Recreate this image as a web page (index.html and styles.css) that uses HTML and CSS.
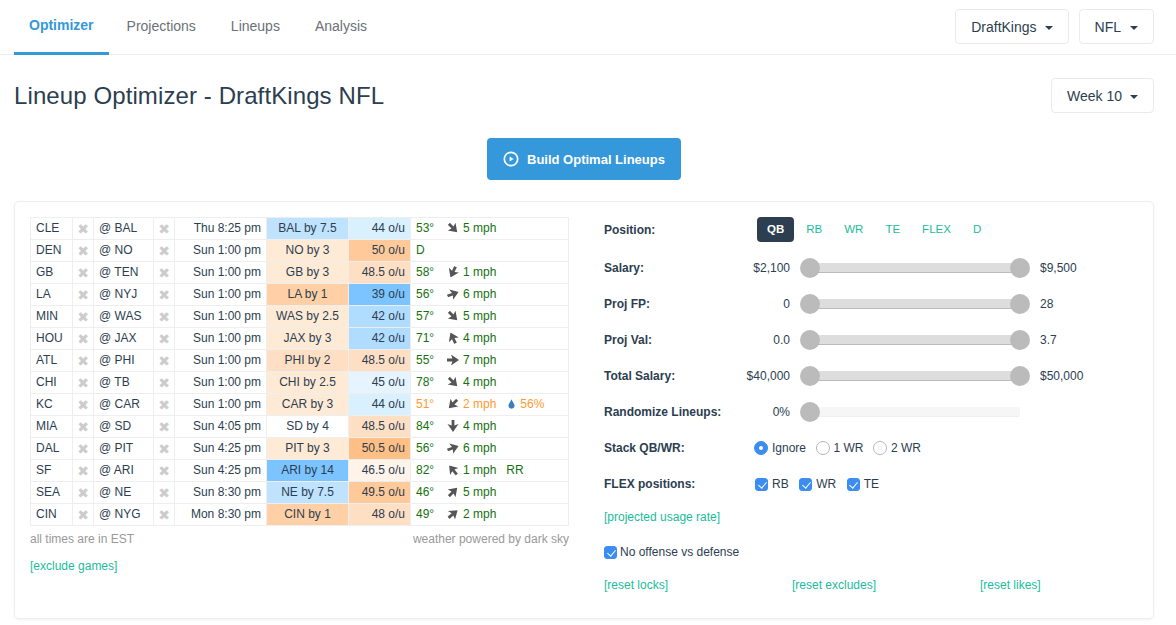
FILE: index.html
```html
<!DOCTYPE html>
<html lang="en">
<head>
    <meta charset="UTF-8">
    <title>Lineup Optimizer</title>
    <link rel="stylesheet" href="styles.css">
</head>
<body>

<svg class="defs" width="0" height="0">
    <symbol id="wind" viewBox="0 0 12 12">
        <path d="M6 0L11.5 8L7.4 6.6V12H4.6V6.6L.5 8Z"/>
    </symbol>
</svg>

<nav class="topbar">
    <div class="tabs">
        <a class="tab active">Optimizer</a>
        <a class="tab">Projections</a>
        <a class="tab">Lineups</a>
        <a class="tab">Analysis</a>
    </div>
    <div class="top-actions">
        <button class="dropdown">DraftKings<span class="caret"></span></button>
        <button class="dropdown">NFL<span class="caret"></span></button>
    </div>
</nav>

<main class="page">
    <div class="title-row">
        <h1>Lineup Optimizer - DraftKings NFL</h1>
        <button class="dropdown">Week 10<span class="caret"></span></button>
    </div>

    <div class="build-row">
        <button class="build">
            <svg class="play" viewBox="0 0 16 16" width="16" height="16">
                <circle cx="8" cy="8" r="6.7" fill="none" stroke="#fff" stroke-width="1.7"/>
                <path d="M6.6 5.4L10.6 8L6.6 10.6Z" fill="#fff"/>
            </svg>
            Build Optimal Lineups
        </button>
    </div>

    <section class="card">
        <div class="games">
            <table class="games-table">
                <colgroup>
                    <col class="c-team"><col class="c-x"><col class="c-opp"><col class="c-x">
                    <col class="c-time"><col class="c-spread"><col class="c-ou"><col class="c-weather">
                </colgroup>
                <tr>
                    <td>CLE</td><td class="x">✖</td><td>@ BAL</td><td class="x">✖</td><td class="time">Thu 8:25 pm</td>
                    <td class="spread cool-2">BAL by 7.5</td><td class="ou cool-1">44 o/u</td>
                    <td><div class="wx"><span class="temp">53°</span><span class="arrow"><svg style="transform: rotate(135deg)"><use href="#wind"/></svg></span><span>5 mph</span></div></td>
                </tr>
                <tr>
                    <td>DEN</td><td class="x">✖</td><td>@ NO</td><td class="x">✖</td><td class="time">Sun 1:00 pm</td>
                    <td class="spread warm-1">NO by 3</td><td class="ou warm-4">50 o/u</td>
                    <td><div class="wx"><span>D</span></div></td>
                </tr>
                <tr>
                    <td>GB</td><td class="x">✖</td><td>@ TEN</td><td class="x">✖</td><td class="time">Sun 1:00 pm</td>
                    <td class="spread warm-1">GB by 3</td><td class="ou warm-2">48.5 o/u</td>
                    <td><div class="wx"><span class="temp">58°</span><span class="arrow"><svg style="transform: rotate(205deg)"><use href="#wind"/></svg></span><span>1 mph</span></div></td>
                </tr>
                <tr>
                    <td>LA</td><td class="x">✖</td><td>@ NYJ</td><td class="x">✖</td><td class="time">Sun 1:00 pm</td>
                    <td class="spread warm-3">LA by 1</td><td class="ou cool-4">39 o/u</td>
                    <td><div class="wx"><span class="temp">56°</span><span class="arrow"><svg style="transform: rotate(70deg)"><use href="#wind"/></svg></span><span>6 mph</span></div></td>
                </tr>
                <tr>
                    <td>MIN</td><td class="x">✖</td><td>@ WAS</td><td class="x">✖</td><td class="time">Sun 1:00 pm</td>
                    <td class="spread warm-1">WAS by 2.5</td><td class="ou cool-3">42 o/u</td>
                    <td><div class="wx"><span class="temp">57°</span><span class="arrow"><svg style="transform: rotate(135deg)"><use href="#wind"/></svg></span><span>5 mph</span></div></td>
                </tr>
                <tr>
                    <td>HOU</td><td class="x">✖</td><td>@ JAX</td><td class="x">✖</td><td class="time">Sun 1:00 pm</td>
                    <td class="spread warm-1">JAX by 3</td><td class="ou cool-3">42 o/u</td>
                    <td><div class="wx"><span class="temp">71°</span><span class="arrow"><svg style="transform: rotate(-25deg)"><use href="#wind"/></svg></span><span>4 mph</span></div></td>
                </tr>
                <tr>
                    <td>ATL</td><td class="x">✖</td><td>@ PHI</td><td class="x">✖</td><td class="time">Sun 1:00 pm</td>
                    <td class="spread warm-2">PHI by 2</td><td class="ou warm-2">48.5 o/u</td>
                    <td><div class="wx"><span class="temp">55°</span><span class="arrow"><svg style="transform: rotate(90deg)"><use href="#wind"/></svg></span><span>7 mph</span></div></td>
                </tr>
                <tr>
                    <td>CHI</td><td class="x">✖</td><td>@ TB</td><td class="x">✖</td><td class="time">Sun 1:00 pm</td>
                    <td class="spread warm-1">CHI by 2.5</td><td class="ou cool-0">45 o/u</td>
                    <td><div class="wx"><span class="temp">78°</span><span class="arrow"><svg style="transform: rotate(135deg)"><use href="#wind"/></svg></span><span>4 mph</span></div></td>
                </tr>
                <tr>
                    <td>KC</td><td class="x">✖</td><td>@ CAR</td><td class="x">✖</td><td class="time">Sun 1:00 pm</td>
                    <td class="spread warm-1">CAR by 3</td><td class="ou cool-1">44 o/u</td>
                    <td><div class="wx rainy"><span class="temp">51°</span><span class="arrow"><svg style="transform: rotate(225deg)"><use href="#wind"/></svg></span><span>2 mph</span>
                        <svg class="drop" viewBox="0 0 8 11" width="7" height="10"><path d="M4 0C5 3 7.5 5 7.5 7.3A3.5 3.5 0 0 1 .5 7.3C.5 5 3 3 4 0Z"/></svg><span>56%</span></div></td>
                </tr>
                <tr>
                    <td>MIA</td><td class="x">✖</td><td>@ SD</td><td class="x">✖</td><td class="time">Sun 4:05 pm</td>
                    <td class="spread">SD by 4</td><td class="ou warm-2">48.5 o/u</td>
                    <td><div class="wx"><span class="temp">84°</span><span class="arrow"><svg style="transform: rotate(180deg)"><use href="#wind"/></svg></span><span>4 mph</span></div></td>
                </tr>
                <tr>
                    <td>DAL</td><td class="x">✖</td><td>@ PIT</td><td class="x">✖</td><td class="time">Sun 4:25 pm</td>
                    <td class="spread warm-1">PIT by 3</td><td class="ou warm-5">50.5 o/u</td>
                    <td><div class="wx"><span class="temp">56°</span><span class="arrow"><svg style="transform: rotate(70deg)"><use href="#wind"/></svg></span><span>6 mph</span></div></td>
                </tr>
                <tr>
                    <td>SF</td><td class="x">✖</td><td>@ ARI</td><td class="x">✖</td><td class="time">Sun 4:25 pm</td>
                    <td class="spread cool-4">ARI by 14</td><td class="ou warm-0">46.5 o/u</td>
                    <td><div class="wx"><span class="temp">82°</span><span class="arrow"><svg style="transform: rotate(-40deg)"><use href="#wind"/></svg></span><span>1 mph</span><span class="precip">RR</span></div></td>
                </tr>
                <tr>
                    <td>SEA</td><td class="x">✖</td><td>@ NE</td><td class="x">✖</td><td class="time">Sun 8:30 pm</td>
                    <td class="spread cool-2">NE by 7.5</td><td class="ou warm-4">49.5 o/u</td>
                    <td><div class="wx"><span class="temp">46°</span><span class="arrow"><svg style="transform: rotate(45deg)"><use href="#wind"/></svg></span><span>5 mph</span></div></td>
                </tr>
                <tr>
                    <td>CIN</td><td class="x">✖</td><td>@ NYG</td><td class="x">✖</td><td class="time">Mon 8:30 pm</td>
                    <td class="spread warm-3">CIN by 1</td><td class="ou warm-2">48 o/u</td>
                    <td><div class="wx"><span class="temp">49°</span><span class="arrow"><svg style="transform: rotate(50deg)"><use href="#wind"/></svg></span><span>2 mph</span></div></td>
                </tr>
            </table>
            <div class="table-notes">
                <span>all times are in EST</span>
                <span>weather powered by dark sky</span>
            </div>
            <a class="link exclude">[exclude games]</a>
        </div>

        <div class="settings">
            <div class="positions">
                <label class="field-label position-label">Position:</label>
                <a class="pill active">QB</a>
                <a class="pill">RB</a>
                <a class="pill">WR</a>
                <a class="pill">TE</a>
                <a class="pill">FLEX</a>
                <a class="pill">D</a>
            </div>

            <div class="field">
                <label class="field-label">Salary:</label>
                <span class="low">$2,100</span>
                <div class="slider"><span class="thumb left"></span><span class="thumb right"></span></div>
                <span>$9,500</span>
            </div>
            <div class="field">
                <label class="field-label">Proj FP:</label>
                <span class="low">0</span>
                <div class="slider"><span class="thumb left"></span><span class="thumb right"></span></div>
                <span>28</span>
            </div>
            <div class="field">
                <label class="field-label">Proj Val:</label>
                <span class="low">0.0</span>
                <div class="slider"><span class="thumb left"></span><span class="thumb right"></span></div>
                <span>3.7</span>
            </div>
            <div class="field">
                <label class="field-label">Total Salary:</label>
                <span class="low">$40,000</span>
                <div class="slider"><span class="thumb left"></span><span class="thumb right"></span></div>
                <span>$50,000</span>
            </div>
            <div class="field">
                <label class="field-label">Randomize Lineups:</label>
                <span class="low">0%</span>
                <div class="slider empty"><span class="thumb left"></span></div>
            </div>
            <div class="field">
                <label class="field-label choice-label">Stack QB/WR:</label>
                <label class="choice"><input type="radio" name="stack" checked>Ignore</label>
                <label class="choice"><input type="radio" name="stack">1 WR</label>
                <label class="choice"><input type="radio" name="stack">2 WR</label>
            </div>
            <div class="field">
                <label class="field-label choice-label">FLEX positions:</label>
                <label class="choice"><input type="checkbox" checked>RB</label>
                <label class="choice"><input type="checkbox" checked>WR</label>
                <label class="choice"><input type="checkbox" checked>TE</label>
            </div>

            <div class="usage"><a class="link">[projected usage rate]</a></div>
            <div class="no-offense">
                <label class="choice"><input type="checkbox" checked>No offense vs defense</label>
            </div>
            <div class="resets">
                <a class="link">[reset locks]</a>
                <a class="link">[reset excludes]</a>
                <a class="link">[reset likes]</a>
            </div>
        </div>
    </section>
</main>

</body>
</html>
```

FILE: styles.css
```css
* {
    box-sizing: border-box;
}
html, body {
    height: 100%;
}
body {
    margin: 0;
    background: #fff;
    color: #2c3e50;
    font-family: "Liberation Sans", Arial, sans-serif;
    font-size: 12px;
    overflow: hidden;
}
.defs {
    position: absolute;
}

/* top nav */
.topbar {
    display: flex;
    justify-content: space-between;
    align-items: flex-start;
    height: 55px;
    padding: 9px 22px 0 14px;
    border-bottom: 1px solid #eee;
}
.tabs {
    display: flex;
    gap: 5px;
    margin-top: -9px;
}
.tab {
    height: 55px;
    padding: 18px 15px 0;
    font-size: 14px;
    color: #6b7177;
}
.tab.active {
    margin-right: -2px;
    color: #3498db;
    font-weight: bold;
    padding-top: 17px;
    border-bottom: 3px solid #3498db;
}
.top-actions {
    display: flex;
    gap: 10px;
}
.dropdown {
    height: 35px;
    padding: 0 15px;
    background: #fff;
    border: 1px solid #eaeaea;
    border-radius: 4px;
    color: #2c3e50;
    font-family: inherit;
    font-size: 14px;
}
.caret {
    display: inline-block;
    margin-left: 8px;
    vertical-align: 2px;
    border-top: 4px solid #2c3e50;
    border-left: 4px solid transparent;
    border-right: 4px solid transparent;
}
.top-actions .dropdown:last-child .caret {
    margin-left: 9px;
}

/* page */
.page {
    padding: 0 22px 0 14px;
}
.title-row {
    display: flex;
    justify-content: space-between;
    align-items: center;
    margin-top: 23px;
}
h1 {
    margin: 0;
    font-size: 24px;
    font-weight: normal;
    letter-spacing: 0.1px;
    color: #2c3e50;
}
.build-row {
    display: flex;
    justify-content: center;
    margin: 25px 0 21px;
}
.build {
    display: flex;
    align-items: center;
    gap: 8px;
    width: 194px;
    height: 42px;
    padding: 0 16px;
    background: #3498db;
    border: none;
    border-radius: 4px;
    color: #fff;
    font-family: inherit;
    font-size: 13px;
    font-weight: bold;
    white-space: nowrap;
}
.play {
    flex: none;
}

/* card */
.card {
    display: flex;
    gap: 35px;
    height: 418px;
    padding: 15px;
    border: 1px solid #eee;
    border-radius: 5px;
    box-shadow: 0 1px 3px rgba(0, 0, 0, 0.05);
}
.games {
    width: 539px;
    flex: none;
}
.games-table {
    width: 539px;
    table-layout: fixed;
    border-collapse: collapse;
}
.c-team { width: 42px; }
.c-x { width: 21px; }
.c-opp { width: 60px; }
.c-time { width: 92px; }
.c-spread { width: 82px; }
.c-ou { width: 62px; }
.games-table td {
    height: 22px;
    padding: 0 5px 2px;
    border: 1px solid #eee;
    white-space: nowrap;
    overflow: hidden;
}
.games-table td.x {
    padding: 0;
    text-align: center;
    color: #ccc;
    font-family: "DejaVu Sans", sans-serif;
    font-size: 14px;
    line-height: 1;
}
.games-table td.time, .games-table td.ou {
    text-align: right;
}
.games-table td.spread {
    text-align: center;
}
.cool-0 { background: #e6f4ff; }
.cool-1 { background: #d9f0ff; }
.cool-2 { background: #bfe2ff; }
.cool-3 { background: #b0dcff; }
.cool-4 { background: #7cc4ff; }
.warm-0 { background: #fff3ea; }
.warm-1 { background: #ffead6; }
.warm-2 { background: #ffdfc4; }
.warm-3 { background: #ffd0a6; }
.warm-4 { background: #ffc999; }
.warm-5 { background: #ffbf85; }

.wx {
    display: flex;
    align-items: center;
    color: #17700f;
}
.wx.rainy {
    color: #ff9a33;
}
.temp {
    width: 29px;
}
.arrow {
    display: flex;
    justify-content: center;
    width: 15px;
    margin-right: 3px;
}
.arrow svg {
    width: 12px;
    height: 12px;
    fill: #555;
}
.drop {
    margin: 0 5px 0 12px;
    fill: #3a7fc4;
}
.precip {
    margin-left: 10px;
}
.table-notes {
    display: flex;
    justify-content: space-between;
    margin-top: 6px;
    color: #999;
}
.link {
    color: #1abc9c;
}
.exclude {
    display: block;
    margin-top: 13px;
}

/* settings column */
.settings {
    flex: 1;
}
.positions {
    display: flex;
    align-items: center;
    gap: 2px;
    height: 25px;
    margin-bottom: 8px;
}
.field-label {
    font-weight: bold;
}
.position-label {
    width: 151px;
}
.pill {
    height: 25px;
    padding: 0 10px;
    border-radius: 4px;
    color: #1abc9c;
    font-size: 11.5px;
    line-height: 25px;
}
.pill.active {
    background: #2c3e50;
    color: #fff;
    font-weight: bold;
}
.field {
    display: flex;
    align-items: center;
    height: 36px;
}
.field > .field-label {
    width: 130px;
}
.field > .choice-label {
    width: 150px;
}
.low {
    width: 56px;
    text-align: right;
}
.slider {
    position: relative;
    width: 210px;
    height: 10px;
    margin: 0 20px;
    background: #ddd;
    border-bottom: 1px solid #bbb;
}
.slider.empty {
    background: #f6f6f6;
    border-bottom-color: #eee;
    border-radius: 0 3px 3px 0;
}
.thumb {
    position: absolute;
    top: -5px;
    width: 20px;
    height: 20px;
    background: #bbb;
    border-radius: 50%;
}
.thumb.left {
    left: -10px;
}
.thumb.right {
    right: -10px;
}
.choice {
    display: flex;
    align-items: center;
    margin-right: 9.5px;
}
.choice input {
    appearance: none;
    position: relative;
    width: 14px;
    height: 14px;
    margin: 0 4px 0 0;
    background: #fff;
    border: 1px solid #b5b5b5;
}
.choice input[type="radio"] {
    border-radius: 50%;
}
.choice input[type="checkbox"] {
    width: 13px;
    height: 13px;
    margin-left: 1px;
    border-radius: 3px;
}
.choice input:checked {
    background: #3b8df0;
    border-color: #3b8df0;
}
.choice input[type="radio"]:checked::after {
    content: "";
    position: absolute;
    top: 4px;
    left: 4px;
    width: 4px;
    height: 4px;
    background: #fff;
    border-radius: 50%;
}
.choice input[type="checkbox"]:checked::after {
    content: "";
    position: absolute;
    top: 1px;
    left: 3.5px;
    width: 4px;
    height: 7px;
    border: solid #fff;
    border-width: 0 1.5px 1.5px 0;
    transform: rotate(40deg);
}
.usage {
    display: flex;
    align-items: center;
    height: 30px;
}
.no-offense {
    display: flex;
    align-items: center;
    height: 40px;
}
.no-offense input[type="checkbox"] {
    margin-left: 0;
    margin-right: 3px;
}
.resets {
    display: flex;
    align-items: center;
    height: 26px;
}
.resets .link {
    width: 188px;
}
```
